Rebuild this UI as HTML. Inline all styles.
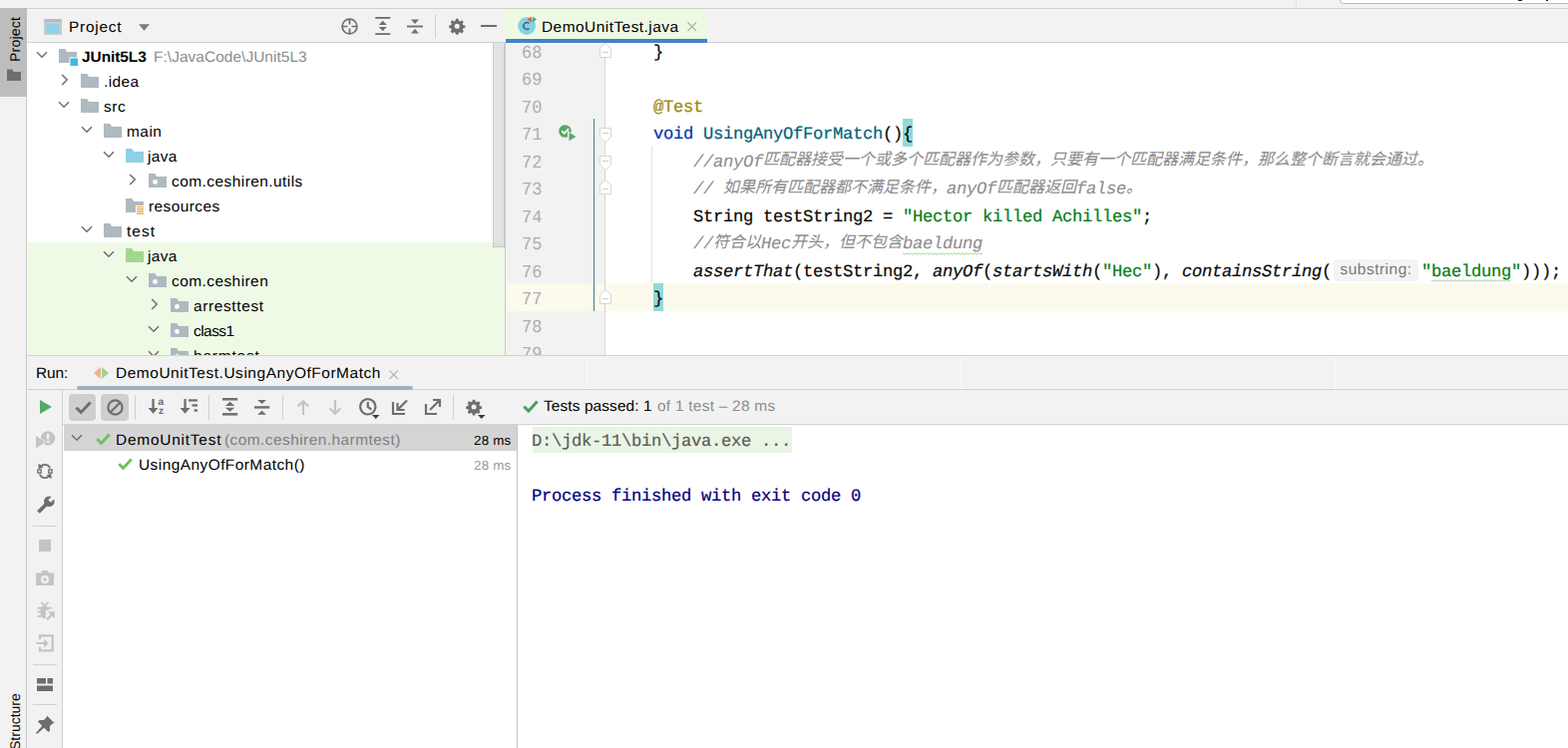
<!DOCTYPE html>
<html lang="en">
<head>
<meta charset="utf-8">
<title>JUnit5L3 - DemoUnitTest.java</title>
<style>
*{box-sizing:border-box;margin:0;padding:0}
html,body{width:1572px;height:750px;overflow:hidden;background:#f2f2f2}
body{position:relative;font-family:"Liberation Sans",sans-serif;font-size:15.5px;letter-spacing:.3px;color:#000;text-rendering:geometricPrecision}
.abs{position:absolute}
.t{position:absolute;white-space:nowrap;line-height:21px;height:21px;font-size:15px;transform:scaleX(1.03);transform-origin:0 0}
svg{position:absolute;overflow:visible}
#topstrip{left:0;top:0;width:1572px;height:9px;background:#f2f2f2;border-bottom:1px solid #d1d1d1}
#topbox{left:1343px;top:-6px;width:240px;height:10px;background:#fff;border:1px solid #bdbdbd;border-radius:4px}
#stripe{left:0;top:9px;width:27px;height:741px;background:#f2f2f2;border-right:1px solid #cbcbcb}
#projbtn{left:0;top:8px;width:27px;height:89px;background:#bdbdbd}
.vtext{position:absolute;white-space:nowrap;transform-origin:0 0;transform:rotate(-90deg);font-size:14px;letter-spacing:.2px;line-height:18px;height:18px}
#projhead{left:27px;top:9px;width:480px;height:34px;background:#f2f2f2;border-bottom:1px solid #d1d1d1}
#tree{left:27px;top:43px;width:480px;height:313px;background:#fff;overflow:hidden}
#treegreen{left:0;top:200px;width:479px;height:114px;background:#eefae6}
#treethumb{left:467px;top:-1px;width:12px;height:206px;background:rgba(200,200,200,.5);border:1px solid rgba(170,170,170,.45)}
#treeedge{left:479px;top:0;width:1px;height:314px;background:#c9c9c9}
.row{position:absolute;left:0;height:25px;width:480px}
.row .lbl{position:absolute;top:3.5px;line-height:21px;height:21px;white-space:nowrap;font-size:15px;transform:scaleX(1.03);transform-origin:0 0}
.gray{color:#8c8c8c}
#edtabs{left:507px;top:9px;width:1065px;height:34px;background:#f2f2f2;border-bottom:1px solid #d1d1d1}
#edtab{left:507px;top:9px;width:202px;height:34px;background:#eef9e4;border-bottom:4px solid #4083c9}
#editor{left:507px;top:43px;width:1065px;height:313px;background:#fff;overflow:hidden}
#gutter{left:0;top:0;width:99px;height:314px;background:#f2f2f2}
#gutline{left:99px;top:0;width:1px;height:314px;background:#d4d4d4}
#caretrow{left:0;width:1065px;height:27.5px;background:#fcfaed}
.mono{-webkit-text-stroke:.2px;font-family:"Liberation Mono",monospace;font-size:17.2px;letter-spacing:-.3144px;white-space:pre;height:27.5px;line-height:27.5px}
.ln{position:absolute;left:15.6px;margin-top:-.2px;color:#adadad;font-size:18.4px;letter-spacing:0;-webkit-text-stroke:0;transform:scaleX(.92);transform-origin:0 0}
.cl{position:absolute;left:108px;color:#080808}
.cj{display:inline-block;position:relative;vertical-align:top;height:27.5px;white-space:nowrap;font-style:normal}
.cjt{position:relative;top:-1.5px;font-family:"Liberation Mono","Noto Sans CJK SC",monospace;font-size:16px;letter-spacing:0;font-style:italic;line-height:27.5px}
.kw{color:#0033b3}.an{color:#9e880d}.fn{color:#00627a}.st{color:#067d17}.cm{color:#8c8c8c;font-style:italic;-webkit-text-stroke:.08px}.it{font-style:italic}
.typo{position:relative;display:inline-block;height:27.5px;vertical-align:top}
.hint{display:inline-block;vertical-align:top;margin:.2px 3px 0 2px;width:85px;height:21.5px;line-height:21px;text-align:center;border-radius:4px;background:#f4f4f4;color:#7a7a7a;font-family:"Liberation Sans",sans-serif;font-size:15.5px;letter-spacing:.5px;font-style:normal;-webkit-text-stroke:0}
.brace{background:#93d9d9;display:inline-block;height:27.5px;vertical-align:top;margin-top:-3.2px;padding-top:3.2px;box-sizing:content-box;height:24.3px}
#runhead{left:27px;top:356px;width:1545px;height:35px;background:#f2f2f2;border-top:1px solid #d1d1d1;border-bottom:1px solid #d1d1d1}
#runleft{left:27px;top:391px;width:36px;height:359px;background:#f2f2f2;border-right:1px solid #d1d1d1}
#runtb{left:63px;top:391px;width:1509px;height:35px;background:#f2f2f2;border-bottom:1px solid #d1d1d1}
#testtree{left:63px;top:426px;width:455px;height:324px;background:#fff}
#testsel{left:64px;top:426px;width:454px;height:26px;background:#d4d4d4}
#split{left:518px;top:426px;width:1px;height:324px;background:#c6c6c6}
#console{left:519px;top:426px;width:1053px;height:324px;background:#fff}
.con{position:absolute}
.tbsel{position:absolute;top:394.5px;width:27.5px;height:27.5px;border-radius:4px;background:#cfcfcf}
.tbsep{position:absolute;top:396px;width:1px;height:25px;background:#d1d1d1}
.lsep{position:absolute;left:33px;width:24px;height:1px;background:#d1d1d1}
#tProject{letter-spacing:0.71px !important}
#tTab{letter-spacing:0.45px !important}
#tRun{letter-spacing:-0.11px !important}
#tRunTab{letter-spacing:0.53px !important}
#tr0{letter-spacing:-0.06px !important}
#trx{letter-spacing:0.04px !important}
#tr1{letter-spacing:0.41px !important}
#tr2{letter-spacing:0.53px !important}
#tr3{letter-spacing:0.46px !important}
#tr4{letter-spacing:0.34px !important}
#tr5{letter-spacing:0.44px !important}
#tr6{letter-spacing:0.4px !important}
#tr7{letter-spacing:1.0px !important}
#tr8{letter-spacing:0.34px !important}
#tr9{letter-spacing:0.43px !important}
#tr10{letter-spacing:0.61px !important}
#tr11{letter-spacing:-0.51px !important}
#tr12{letter-spacing:0.78px !important}
#tT1b{letter-spacing:0.43px !important}
#tT2{letter-spacing:0.43px !important}
#tMs1{letter-spacing:0.2px !important}
#tMs2{letter-spacing:0.2px !important}
#tPassed2{letter-spacing:0.24px !important}
#tT1{letter-spacing:0.75px !important}
#tPassed{letter-spacing:0.09px !important}
</style>
</head>
<body>
<div class="abs" id="topstrip"></div><div class="abs" id="topbox"></div>
<div class="abs" style="left:1522px;top:0;width:4px;height:1px;background:#222"></div><div class="abs" style="left:1550px;top:0;width:2px;height:1px;background:#222"></div>
<div class="abs" id="stripe"></div><div class="abs" id="projbtn"></div>
<div class="vtext" style="left:6px;top:62px">Project</div>
<svg style="left:7px;top:69px" width="14" height="12" viewBox="0 0 14 12"><path d="M0 .5h5.2l1.600 2.600H14V12H0z" fill="#6e6e6e"/></svg>
<div class="vtext" style="left:6px;top:752px;letter-spacing:0">Structure</div>
<div class="abs" id="projhead"></div>
<svg style="left:44px;top:19px" width="18" height="16" viewBox="0 0 18 16"><rect width="18" height="16" fill="#c4cbd1"/><rect x="1" width="16" height="3" fill="#b3bcc4"/><rect x="2.500" y="5" width="13" height="9" fill="#8fd0e8"/></svg>
<div class="t" style="left:68.600px;top:16.700px" id="tProject">Project</div>
<svg style="left:139px;top:24px" width="11" height="7" viewBox="0 0 12 7"><path d="M0 0h12L6 7z" fill="#7a7a7a"/></svg>
<svg style="left:342px;top:17.500px" width="17" height="17" viewBox="0 0 17 17" fill="none" stroke="#6e6e6e" stroke-width="1.700"><circle cx="8.500" cy="8.500" r="7.400"/><path d="M8.500 1v5.500M8.500 10.500v5.500M1 8.500h5.500M10.500 8.500h5.500"/></svg>
<svg style="left:376px;top:17px" width="15.500" height="18" viewBox="0 0 15 18" fill="#6e6e6e"><rect width="15" height="1.800"/><rect y="16.200" width="15" height="1.800"/><path d="M7.500 3.800l4 4.200h-8zM7.500 14.200l4-4.200h-8z"/></svg>
<svg style="left:408px;top:18px" width="16" height="17" viewBox="0 0 16 17" fill="#6e6e6e"><rect y="7.600" width="16" height="1.800"/><path d="M8 6l4-4.500H4zM8 11l4 4.500H4z"/></svg>
<div class="abs" style="left:436px;top:14px;width:1px;height:24px;background:#d1d1d1"></div>
<svg style="left:450px;top:18px" width="16.500" height="16.500" viewBox="0 0 18 18"><path fill="#6e6e6e" fill-rule="evenodd" d="M7.600 .800h2.800l.400 2.300 1.500.600 1.900-1.300 2 2-1.300 1.900.600 1.500 2.300.400v2.800l-2.300.400-.600 1.500 1.300 1.900-2 2-1.900-1.300-1.500.600-.400 2.300H7.600l-.400-2.300-1.500-.600-1.900 1.300-2-2 1.300-1.900-.600-1.500-2.300-.400V8.200l2.300-.400.600-1.500L1.800 4.400l2-2 1.900 1.300 1.500-.600zM9 6.200a2.800 2.800 0 1 0 0 5.600 2.800 2.800 0 0 0 0-5.600z"/></svg>
<div class="abs" style="left:482px;top:24.500px;width:15.500px;height:2.500px;background:#6e6e6e"></div>
<div class="abs" id="tree"><div class="abs" id="treegreen"></div><div class="row" style="top:0px"><svg style="left:9.2px;top:8px" width="12" height="8" viewBox="0 0 12 8" fill="none" stroke="#6e6e6e" stroke-width="1.500"><path d="M1 1.200l5 5 5-5"/></svg><svg style="left:32.0px;top:5px" width="18" height="16" viewBox="0 0 18 16"><path d="M0 1h6.200l2 3H18v11H0z" fill="#aeb9c0"/><rect x="10.500" y="9.500" width="9" height="9" fill="#fff"/><rect x="11.500" y="10.500" width="7.500" height="7.500" fill="#40b6e0"/></svg><span class="lbl" style="left:54.5px;font-weight:bold;letter-spacing:-.2px" id="tr0">JUnit5L3</span><span class="lbl gray" style="left:126.500px;letter-spacing:.1px" id="trx">F:\JavaCode\JUnit5L3</span></div>
<div class="row" style="top:25px"><svg style="left:33.7px;top:6px" width="8" height="12" viewBox="0 0 8 12" fill="none" stroke="#6e6e6e" stroke-width="1.500"><path d="M1.200 1l5 5-5 5"/></svg><svg style="left:54.0px;top:5px" width="18" height="16" viewBox="0 0 18 16"><path d="M0 1h6.200l2 3H18v11H0z" fill="#aeb9c0"/></svg><span class="lbl" style="left:77.0px" id="tr1">.idea</span></div>
<div class="row" style="top:50px"><svg style="left:31.2px;top:8px" width="12" height="8" viewBox="0 0 12 8" fill="none" stroke="#6e6e6e" stroke-width="1.500"><path d="M1 1.200l5 5 5-5"/></svg><svg style="left:54.0px;top:5px" width="18" height="16" viewBox="0 0 18 16"><path d="M0 1h6.200l2 3H18v11H0z" fill="#aeb9c0"/></svg><span class="lbl" style="left:77.0px" id="tr2">src</span></div>
<div class="row" style="top:75px"><svg style="left:54.2px;top:8px" width="12" height="8" viewBox="0 0 12 8" fill="none" stroke="#6e6e6e" stroke-width="1.500"><path d="M1 1.200l5 5 5-5"/></svg><svg style="left:77.0px;top:5px" width="18" height="16" viewBox="0 0 18 16"><path d="M0 1h6.200l2 3H18v11H0z" fill="#aeb9c0"/></svg><span class="lbl" style="left:99.5px" id="tr3">main</span></div>
<div class="row" style="top:100px"><svg style="left:76.2px;top:8px" width="12" height="8" viewBox="0 0 12 8" fill="none" stroke="#6e6e6e" stroke-width="1.500"><path d="M1 1.200l5 5 5-5"/></svg><svg style="left:99.0px;top:5px" width="18" height="16" viewBox="0 0 18 16"><path d="M0 1h6.200l2 3H18v11H0z" fill="#8fd0e8"/></svg><span class="lbl" style="left:120.8px" id="tr4">java</span></div>
<div class="row" style="top:125px"><svg style="left:101.7px;top:6px" width="8" height="12" viewBox="0 0 8 12" fill="none" stroke="#6e6e6e" stroke-width="1.500"><path d="M1.200 1l5 5-5 5"/></svg><svg style="left:122.0px;top:5px" width="18" height="16" viewBox="0 0 18 16"><path d="M0 1h6.200l2 3H18v11H0z" fill="#aeb9c0"/><circle cx="6.500" cy="9.500" r="2.400" fill="#fff"/></svg><span class="lbl" style="left:144.5px" id="tr5">com.ceshiren.utils</span></div>
<div class="row" style="top:150px"><svg style="left:99.0px;top:5px" width="18" height="16" viewBox="0 0 18 16"><path d="M0 1h6.200l2 3H18v11H0z" fill="#aeb9c0"/><rect x="10" y="8" width="9" height="9" fill="#fff"/><path d="M11 9.500h7M11 11.700h7M11 13.900h7M11 16.100h7" stroke="#e2a53a" stroke-width="1.200"/></svg><span class="lbl" style="left:122.0px" id="tr6">resources</span></div>
<div class="row" style="top:175px"><svg style="left:54.2px;top:8px" width="12" height="8" viewBox="0 0 12 8" fill="none" stroke="#6e6e6e" stroke-width="1.500"><path d="M1 1.200l5 5 5-5"/></svg><svg style="left:77.0px;top:5px" width="18" height="16" viewBox="0 0 18 16"><path d="M0 1h6.200l2 3H18v11H0z" fill="#aeb9c0"/></svg><span class="lbl" style="left:99.5px" id="tr7">test</span></div>
<div class="row" style="top:200px"><svg style="left:76.2px;top:8px" width="12" height="8" viewBox="0 0 12 8" fill="none" stroke="#6e6e6e" stroke-width="1.500"><path d="M1 1.200l5 5 5-5"/></svg><svg style="left:99.0px;top:5px" width="18" height="16" viewBox="0 0 18 16"><path d="M0 1h6.200l2 3H18v11H0z" fill="#a4d68f"/></svg><span class="lbl" style="left:120.8px" id="tr8">java</span></div>
<div class="row" style="top:225px"><svg style="left:99.2px;top:8px" width="12" height="8" viewBox="0 0 12 8" fill="none" stroke="#6e6e6e" stroke-width="1.500"><path d="M1 1.200l5 5 5-5"/></svg><svg style="left:122.0px;top:5px" width="18" height="16" viewBox="0 0 18 16"><path d="M0 1h6.200l2 3H18v11H0z" fill="#aeb9c0"/><circle cx="6.500" cy="9.500" r="2.400" fill="#fff"/></svg><span class="lbl" style="left:144.5px" id="tr9">com.ceshiren</span></div>
<div class="row" style="top:250px"><svg style="left:123.7px;top:6px" width="8" height="12" viewBox="0 0 8 12" fill="none" stroke="#6e6e6e" stroke-width="1.500"><path d="M1.200 1l5 5-5 5"/></svg><svg style="left:144.0px;top:5px" width="18" height="16" viewBox="0 0 18 16"><path d="M0 1h6.200l2 3H18v11H0z" fill="#aeb9c0"/><circle cx="6.500" cy="9.500" r="2.400" fill="#fff"/></svg><span class="lbl" style="left:167.0px" id="tr10">arresttest</span></div>
<div class="row" style="top:275px"><svg style="left:121.2px;top:8px" width="12" height="8" viewBox="0 0 12 8" fill="none" stroke="#6e6e6e" stroke-width="1.500"><path d="M1 1.200l5 5 5-5"/></svg><svg style="left:144.0px;top:5px" width="18" height="16" viewBox="0 0 18 16"><path d="M0 1h6.200l2 3H18v11H0z" fill="#aeb9c0"/><circle cx="6.500" cy="9.500" r="2.400" fill="#fff"/></svg><span class="lbl" style="left:167.0px" id="tr11">class1</span></div>
<div class="row" style="top:300px"><svg style="left:121.2px;top:8px" width="12" height="8" viewBox="0 0 12 8" fill="none" stroke="#6e6e6e" stroke-width="1.500"><path d="M1 1.200l5 5 5-5"/></svg><svg style="left:144.0px;top:5px" width="18" height="16" viewBox="0 0 18 16"><path d="M0 1h6.200l2 3H18v11H0z" fill="#aeb9c0"/><circle cx="6.500" cy="9.500" r="2.400" fill="#fff"/></svg><span class="lbl" style="left:167.0px" id="tr12">harmtest</span></div><div class="abs" id="treethumb"></div><div class="abs" id="treeedge"></div></div>
<div class="abs" id="edtabs"></div><div class="abs" id="edtab"></div>
<svg style="left:519px;top:17px" width="19" height="18" viewBox="0 0 19 18"><circle cx="9.100" cy="9" r="8.900" fill="#84d2e6"/><path d="M11.400 11.400a3.300 3.300 0 1 1 0-4.800" fill="none" stroke="#47626c" stroke-width="1.500"/><path d="M13.800 -.500v6l-4.300-3z" fill="#e0603d"/><path d="M14.800 -.500v6l4.300-3z" fill="#59a869"/></svg>
<div class="t" style="left:543px;top:17.100px" id="tTab">DemoUnitTest.java</div>
<svg style="left:689px;top:21.500px" width="9.500" height="9.500" viewBox="0 0 10 10" stroke="#b0b0b0" stroke-width="1.300"><path d="M.500 .500l9 9M9.500 .500l-9 9"/></svg>
<div class="abs" id="editor"><div class="abs" id="gutter"></div>
<div class="abs" id="caretrow" style="top:241.25px"></div>
<div class="abs" id="gutline"></div>
<div class="abs" style="left:88.200px;top:76.25px;width:1.300px;height:192.5px;background:#3f8286"></div>
<div class="abs" style="left:146px;top:103.75px;width:1px;height:137.5px;background:#e3e3e3"></div>
<div class="mono ln" style="top:-3.05px">68</div>
<div class="mono ln" style="top:24.45px">69</div>
<div class="mono ln" style="top:51.95px">70</div>
<div class="mono ln" style="top:79.45px">71</div>
<div class="mono ln" style="top:106.95px">72</div>
<div class="mono ln" style="top:134.45px">73</div>
<div class="mono ln" style="top:161.95px">74</div>
<div class="mono ln" style="top:189.45px">75</div>
<div class="mono ln" style="top:216.95px">76</div>
<div class="mono ln" style="top:244.45px">77</div>
<div class="mono ln" style="top:271.95px">78</div>
<div class="mono ln" style="top:299.45px">79</div>
<svg style="left:94px;top:-0.05px" width="12" height="15" viewBox="0 0 12 15"><path d="M.500 14.500V5.500L6 .500l5.500 5v9z" fill="#fff" stroke="#d6d6d6"/><path d="M3 9.500h6" stroke="#d0d0d0" stroke-width="1.200"/></svg>
<svg style="left:94px;top:85.25px" width="12" height="15" viewBox="0 0 12 15"><path d="M.500 .500h11v9L6 14.500 .500 9.500z" fill="#fff" stroke="#d6d6d6"/><path d="M3 5.500h6" stroke="#d0d0d0" stroke-width="1.200"/></svg>
<svg style="left:94px;top:112.75px" width="12" height="15" viewBox="0 0 12 15"><path d="M.500 .500h11v9L6 14.500 .500 9.500z" fill="#fff" stroke="#d6d6d6"/><path d="M3 5.500h6" stroke="#d0d0d0" stroke-width="1.200"/></svg>
<svg style="left:94px;top:137.45px" width="12" height="15" viewBox="0 0 12 15"><path d="M.500 14.500V5.500L6 .500l5.500 5v9z" fill="#fff" stroke="#d6d6d6"/><path d="M3 9.500h6" stroke="#d0d0d0" stroke-width="1.200"/></svg>
<svg style="left:94px;top:247.45px" width="12" height="15" viewBox="0 0 12 15"><path d="M.500 14.500V5.500L6 .500l5.500 5v9z" fill="#fff" stroke="#d6d6d6"/><path d="M3 9.500h6" stroke="#d0d0d0" stroke-width="1.200"/></svg>
<svg style="left:53px;top:81.75px" width="18" height="18" viewBox="0 0 18 18"><circle cx="6.500" cy="6.500" r="6.300" fill="#59a869"/><path d="M3.300 6.300l2.500 2.500 4.200-4.600" fill="none" stroke="#fff" stroke-width="1.800"/><path d="M9 6l9 5.500-9 5.500z" fill="#f2f2f2"/><path d="M10.500 7.800l7 4.200-7 4.200z" fill="#59a869"/></svg>
<div class="mono cl" style="top:-3.05px" id="c68">    }</div>
<div class="mono cl" style="top:51.950px" id="c70">    <span class="an">@Test</span></div>
<div class="mono cl" style="top:79.45px" id="c71">    <span class="kw">void</span> <span class="fn">UsingAnyOfForMatch</span>()<span class="brace">{</span></div>
<div class="mono cl" style="top:106.95px" id="c72">        <span class="cm">//anyOf<span class="cj" style="width:672px"><span class="cjt">匹配器接受一个或多个匹配器作为参数，只要有一个匹配器满足条件，那么整个断言就会通过。</span></span></span></div>
<div class="mono cl" style="top:134.45px" id="c73">        <span class="cm">// <span class="cj" style="width:224px"><span class="cjt">如果所有匹配器都不满足条件，</span></span>anyOf<span class="cj" style="width:80px"><span class="cjt">匹配器返回</span></span>false<span class="cj" style="width:16px"><span class="cjt">。</span></span></span></div>
<div class="mono cl" style="top:161.95px" id="c74">        String testString2 = <span class="st">"Hector killed Achilles"</span>;</div>
<div class="mono cl" style="top:189.45px" id="c75">        <span class="cm">//<span class="cj" style="width:48px"><span class="cjt">符合以</span></span>Hec<span class="cj" style="width:112px"><span class="cjt">开头，但不包含</span></span><span class="typo">baeldung<svg width="80" height="3" viewBox="0 0 80 2.400" style="left:0;top:20.4px" fill="none" stroke="#a2cc97" stroke-width=".950"><polyline points="0,0.4 2,2.0 4,0.4 6,2.0 8,0.4 10,2.0 12,0.4 14,2.0 16,0.4 18,2.0 20,0.4 22,2.0 24,0.4 26,2.0 28,0.4 30,2.0 32,0.4 34,2.0 36,0.4 38,2.0 40,0.4 42,2.0 44,0.4 46,2.0 48,0.4 50,2.0 52,0.4 54,2.0 56,0.4 58,2.0 60,0.4 62,2.0 64,0.4 66,2.0 68,0.4 70,2.0 72,0.4 74,2.0 76,0.4 78,2.0 80,0.4"/></svg></span></span></div>
<div class="mono cl" style="top:216.95px" id="c76">        <span class="it">assertThat</span>(testString2, <span class="it">anyOf</span>(<span class="it">startsWith</span>(<span class="st">"Hec"</span>), <span class="it">containsString</span>(<span class="hint">substring:</span><span class="st">"<span class="typo">baeldung<svg width="80" height="3" viewBox="0 0 80 2.400" style="left:0;top:20.4px" fill="none" stroke="#a2cc97" stroke-width=".950"><polyline points="0,0.4 2,2.0 4,0.4 6,2.0 8,0.4 10,2.0 12,0.4 14,2.0 16,0.4 18,2.0 20,0.4 22,2.0 24,0.4 26,2.0 28,0.4 30,2.0 32,0.4 34,2.0 36,0.4 38,2.0 40,0.4 42,2.0 44,0.4 46,2.0 48,0.4 50,2.0 52,0.4 54,2.0 56,0.4 58,2.0 60,0.4 62,2.0 64,0.4 66,2.0 68,0.4 70,2.0 72,0.4 74,2.0 76,0.4 78,2.0 80,0.4"/></svg></span>"</span>)));</div>
<div class="mono cl" style="top:244.45px" id="c77">    <span class="brace">}</span></div></div>
<div class="abs" id="runhead"></div>
<div class="abs" style="left:588px;top:357px;width:1px;height:33px;background:#fafafa"></div>
<div class="abs" style="left:963px;top:357px;width:1px;height:33px;background:#fafafa"></div>
<div class="abs" style="left:1338px;top:357px;width:1px;height:33px;background:#fafafa"></div>
<div class="abs" style="left:1299px;top:0;width:1px;height:8px;background:#e2e2e2"></div>
<div class="t" style="left:35.500px;top:363.800px" id="tRun">Run:</div>
<svg style="left:94px;top:368px" width="15" height="12" viewBox="0 0 15 12"><path d="M7 0v12L0 6z" fill="#f4af8d"/><path d="M8 0v12l7-6z" fill="#a5d28c"/></svg>
<div class="t" style="left:116px;top:363.800px" id="tRunTab">DemoUnitTest.UsingAnyOfForMatch</div>
<svg style="left:390px;top:370.500px" width="9.500" height="9.500" viewBox="0 0 10 10" stroke="#b8b8b8" stroke-width="1.300"><path d="M.500 .500l9 9M9.500 .500l-9 9"/></svg>
<div class="abs" style="left:77px;top:387px;width:337px;height:4px;border-radius:2px;background:#a3aec2"></div>
<div class="abs" id="runleft"></div><div class="abs" id="runtb"></div>
<svg style="left:40px;top:401px" width="12" height="14" viewBox="0 0 12 14"><path d="M0 0l12 7-12 7z" fill="#59a869"/></svg>
<svg style="left:36px;top:432px" width="19" height="18" viewBox="0 0 19 18"><circle cx="12" cy="7.500" r="7.200" fill="#c4c4c4"/><path d="M0 5l9.500 6.200L0 17.500z" fill="#c4c4c4" stroke="#f2f2f2" stroke-width="1.300"/><path d="M0 5l9.500 6.200L0 17.500z" fill="#c4c4c4"/><rect x="11" y="2.800" width="2.400" height="5.600" fill="#f2f2f2"/><rect x="11" y="9.800" width="2.400" height="2.200" fill="#f2f2f2"/></svg>
<svg style="left:37px;top:463px" width="16" height="19" viewBox="0 0 16 19" fill="none" stroke="#6e6e6e" stroke-width="1.700"><path d="M13.300 6.300A6 6 0 0 0 3.600 4.600"/><path d="M2.700 12.700A6 6 0 0 0 12.400 14.400"/><path d="M1.300 1.800l.500 5.400 4.900-2z" fill="#6e6e6e" stroke="none"/><path d="M14.700 17.200l-.500-5.400-4.900 2z" fill="#6e6e6e" stroke="none"/><rect x=".900" y="7.900" width="3.300" height="3.300" fill="#f2f2f2" stroke-width="1.300"/><rect x="11.800" y="7.900" width="3.300" height="3.300" fill="#f2f2f2" stroke-width="1.300"/></svg>
<svg style="left:37px;top:497px" width="18" height="18" viewBox="0 0 18 18"><path d="M1.500 16.500L11 7" stroke="#6e6e6e" stroke-width="3.800"/><circle cx="12.300" cy="5.700" r="5.300" fill="#6e6e6e"/><path d="M12.600 5.400L18.500 -.500" stroke="#f2f2f2" stroke-width="3.600"/></svg>
<div class="lsep" style="top:527px"></div>
<div class="abs" style="left:39px;top:541px;width:12px;height:12px;background:#c4c4c4"></div>
<svg style="left:36px;top:572.400px" width="18" height="15" viewBox="0 0 18 15"><path d="M0 2.600h5.200l.800-2.600h6l.800 2.600H18V15H0z" fill="#c4c4c4"/><circle cx="9" cy="8.900" r="2.900" fill="none" stroke="#f2f2f2" stroke-width="2.200"/></svg>
<svg style="left:36px;top:603px" width="19" height="19" viewBox="0 0 19 19" fill="none" stroke="#c4c4c4" stroke-width="1.700"><ellipse cx="8.700" cy="10.600" rx="4.400" ry="6.700" fill="#c4c4c4" stroke="none"/><path d="M5.200 .800l3.300 3M12.600 .800l-3.300 3M1.400 6.600h14.900M1.400 10.400h4M1.400 14.800h4"/><rect x="9.900" y="8.700" width="9.500" height="10.500" fill="#f2f2f2" stroke="none"/><path d="M11.800 10.300h7v7z" fill="#c4c4c4" stroke="none"/><path d="M11 18.200l5.600-5.600" stroke-width="2.400"/></svg>
<svg style="left:36px;top:636px" width="19" height="18" viewBox="0 0 19 18" fill="none" stroke="#c4c4c4"><path d="M4 5V1.300h12.700v15.100H4v-3.700" stroke-width="2.300"/><path d="M.200 8.900H10" stroke-width="2"/><path d="M8 4.600l4.700 4.300L8 13.400z" fill="#c4c4c4" stroke="none"/></svg>
<div class="lsep" style="top:666px"></div>
<svg style="left:37px;top:680px" width="16" height="13" viewBox="0 0 16 13" fill="#6e6e6e"><rect width="9" height="5.500"/><rect x="10.500" width="5.500" height="5.500"/><rect y="7.500" width="16" height="5.500"/></svg>
<div class="lsep" style="top:706px"></div>
<svg style="left:36px;top:717px" width="19" height="19" viewBox="0 0 19 19"><path d="M11 .500l7.500 7.500-2 .600-2.600 2.600.200 4.300-1.600 1.600-4.300-4.300L1 19l-1-1 6.200-7.200L2 6.500l1.600-1.600 4.300.200 2.600-2.600z" fill="#6e6e6e"/></svg>
<div class="tbsel" style="left:68.700px"></div><div class="tbsel" style="left:101px"></div>
<svg style="left:74.500px;top:401.500px" width="17" height="13.500" viewBox="0 0 16 13" fill="none" stroke="#6e6e6e" stroke-width="2.900"><path d="M1.200 6.500l4.600 4.500L14.800 1.500"/></svg>
<svg style="left:107px;top:400px" width="17" height="17" viewBox="0 0 17 17" fill="none" stroke="#6e6e6e" stroke-width="2.200"><circle cx="8.500" cy="8.500" r="7.100"/><path d="M3.500 13.500l10-10"/></svg>
<div class="tbsep" style="left:135px"></div>
<div class="tbsep" style="left:209px"></div>
<div class="tbsep" style="left:283px"></div>
<div class="tbsep" style="left:454px"></div>
<svg style="left:147.500px;top:400.400px" width="17" height="15" viewBox="0 0 17 15" fill="#6e6e6e"><path d="M4.400 0h2.300v9h3.900L5.550 14.700.500 9h3.900z"/><text x="10.6" y="5.5" font-family="'Liberation Sans',sans-serif" font-weight="bold" font-size="10.2" letter-spacing="0" fill="#6e6e6e">a</text><text x="10.9" y="14.700" font-family="'Liberation Sans',sans-serif" font-weight="bold" font-size="10.2" letter-spacing="0" fill="#6e6e6e">z</text></svg>
<svg style="left:180px;top:400.400px" width="18" height="15" viewBox="0 0 18 15" fill="#6e6e6e"><path d="M4.400 0h2.300v9h3.900L5.550 14.700.500 9h3.900z"/><rect x="9" y=".300" width="9" height="2.300"/><rect x="12.500" y="5.300" width="5.500" height="2.300"/><rect x="14.600" y="10.400" width="3.400" height="2.300"/></svg>
<svg style="left:222.500px;top:399.300px" width="15.200" height="17.600" viewBox="0 0 15.200 17.600" fill="#6e6e6e"><rect width="15.200" height="2.500"/><rect y="15.100" width="15.200" height="2.500"/><path d="M7.600 3.800l4.800 4.100H2.800zM7.600 13.800l4.800-4.100H2.800z"/></svg>
<svg style="left:255.400px;top:400.500px" width="15.200" height="14.800" viewBox="0 0 15.200 14.800" fill="#6e6e6e"><rect y="6.200" width="15.200" height="2.400"/><path d="M7.600 4l4.400-3.900H3.200zM7.600 10.800l4.400 3.900H3.200z"/></svg>
<svg style="left:298px;top:401px" width="12" height="15" viewBox="0 0 12 15" fill="none" stroke="#c4c4c4" stroke-width="2.200"><path d="M6 15V1.500M.700 6.500L6 1.200l5.300 5.300"/></svg>
<svg style="left:330px;top:401px" width="12" height="15" viewBox="0 0 12 15" fill="none" stroke="#c4c4c4" stroke-width="2.200"><path d="M6 0v13.500M.700 8.500L6 13.800l5.300-5.300"/></svg>
<svg style="left:360px;top:399px" width="21" height="22" viewBox="0 0 21 22" fill="none" stroke="#6e6e6e" stroke-width="2.200"><circle cx="8.800" cy="8.800" r="7.700"/><path d="M8.800 4v5l3.500 2.500"/><path d="M13 17h7.500l-3.750 4z" fill="#3c3c3c" stroke="none"/></svg>
<svg style="left:393px;top:400px" width="16" height="16" viewBox="0 0 16 16" fill="none" stroke="#6e6e6e" stroke-width="2.200"><path d="M1 3v12h12"/><path d="M15 1.500L6 10.500M5.500 4v7h7"/></svg>
<svg style="left:426px;top:400px" width="16" height="16" viewBox="0 0 16 16" fill="none" stroke="#6e6e6e" stroke-width="2.200"><path d="M1 5v10h11"/><path d="M5 11l9.500-9.500M8 1h7v7"/></svg>
<svg style="left:467px;top:399.500px" width="20" height="21" viewBox="0 0 20 21"><path fill="#6e6e6e" fill-rule="evenodd" transform="scale(.900)" d="M7.600 .800h2.800l.400 2.300 1.500.600 1.900-1.300 2 2-1.300 1.900.600 1.500 2.300.400v2.800l-2.300.400-.600 1.500 1.300 1.900-2 2-1.900-1.300-1.500.600-.400 2.300H7.600l-.400-2.300-1.500-.600-1.900 1.300-2-2 1.300-1.900-.600-1.500-2.300-.400V8.200l2.300-.400.600-1.500L1.800 4.400l2-2 1.900 1.300 1.500-.600zM9 6.200a2.800 2.800 0 1 0 0 5.600 2.800 2.800 0 0 0 0-5.600z"/><path d="M12 16h7.500l-3.750 4z" fill="#3c3c3c"/></svg>
<svg style="left:523.500px;top:400.500px" width="16" height="12.800" viewBox="0 0 15 12" stroke="#4a9e5c"><path d="M1.300 6.200l4.200 4.300L13.700 1.500" fill="none" stroke-width="2.800"/></svg>
<div class="t" style="left:545px;top:397.400px" id="tPassed">Tests passed: 1</div>
<div class="t" style="left:659px;top:397.400px;color:#8c8c8c" id="tPassed2">of 1 test – 28 ms</div>
<div class="abs" id="testtree"></div><div class="abs" id="testsel"></div>
<svg style="left:71px;top:435px" width="12" height="8" viewBox="0 0 12 8" fill="none" stroke="#6e6e6e" stroke-width="1.500"><path d="M1 1.200l5 5 5-5"/></svg>
<svg style="left:96px;top:434px" width="15" height="12" viewBox="0 0 15 12" stroke="#6cc058"><path d="M1.300 6.200l4.200 4.300L13.700 1.500" fill="none" stroke-width="2.800"/></svg>
<div class="t" style="left:115.700px;top:430.900px" id="tT1">DemoUnitTest</div>
<div class="t" style="left:224.900px;top:430.900px;color:#7f7f7f" id="tT1b">(com.ceshiren.harmtest)</div>
<div class="t" style="left:475px;top:431px;font-size:13px" id="tMs1">28 ms</div>
<svg style="left:118px;top:459px" width="15" height="12" viewBox="0 0 15 12" stroke="#6cc058"><path d="M1.300 6.200l4.200 4.300L13.700 1.500" fill="none" stroke-width="2.800"/></svg>
<div class="t" style="left:139px;top:456px" id="tT2">UsingAnyOfForMatch()</div>
<div class="t" style="left:475px;top:456px;font-size:13px;color:#999" id="tMs2">28 ms</div>
<div class="abs" id="split"></div>
<div class="abs" id="console"></div>
<div class="abs" style="left:533.500px;top:427.500px;width:260.500px;height:26px;background:#e9f5e5"></div>
<div class="mono con" style="left:533px;top:429.55px;color:#5c5c5c" id="con1">D:\jdk-11\bin\java.exe ...</div>
<div class="mono con" style="left:533px;top:484.55px;color:#00007f" id="con3">Process finished with exit code 0</div>
</body>
</html>
